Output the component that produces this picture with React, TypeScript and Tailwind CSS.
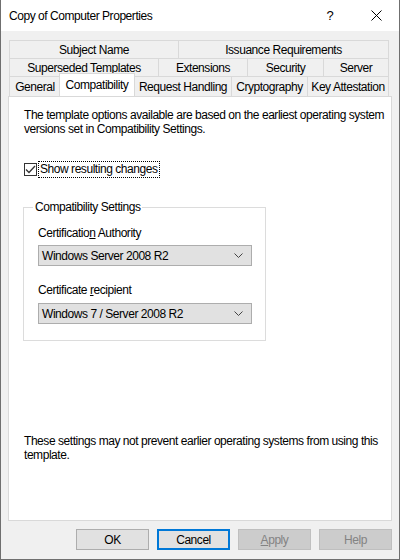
import React from "react";

const font = { fontFamily: '"Liberation Sans", Arial, sans-serif', letterSpacing: "-0.45px" };

function Tab({ label, w, active }: { label: string; w: number; active?: boolean }) {
  if (active) {
    return (
      <div
        className="relative z-10 -mt-[2px] -mx-[1px] h-[23px] bg-white border border-b-0 border-[#d9d9d9] flex justify-center pt-[2px] text-[12px] whitespace-nowrap"
        style={{ width: w + 2 }}
      >
        {label}
      </div>
    );
  }
  return (
    <div
      className="h-[18px] bg-[#f0f0f0] border-t border-l border-[#d9d9d9] last:border-r flex items-center justify-center text-[12px] whitespace-nowrap"
      style={{ width: w }}
    >
      {label}
    </div>
  );
}

function LowTab({ label, w, last }: { label: string; w: number; last?: boolean }) {
  return (
    <div
      className={
        "h-[20px] bg-[#f0f0f0] border-t border-l border-[#d9d9d9] flex items-center justify-center text-[12px] whitespace-nowrap " +
        (last ? "border-r" : "")
      }
      style={{ width: w }}
    >
      {label}
    </div>
  );
}

function Select({ value }: { value: string }) {
  return (
    <div className="w-[214px] h-[21px] bg-[#e1e1e1] border border-[#adadad] flex items-center justify-between pl-[3px] pr-[8px] text-[12px] whitespace-nowrap">
      <span>{value}</span>
      <svg width="9" height="6" viewBox="0 0 9 6">
        <path d="M0.5 0.5 L4.5 4.5 L8.5 0.5" fill="none" stroke="#444" strokeWidth="1" />
      </svg>
    </div>
  );
}

function Button({ label, primary, disabled, under }: { label: string; primary?: boolean; disabled?: boolean; under?: boolean }) {
  return (
    <div
      className={
        "w-[73px] h-[21px] flex items-center justify-center text-[12px] " +
        (primary
          ? "border-2 border-[#0078d7] bg-[#e1e1e1] "
          : disabled
          ? "border border-[#bfbfbf] bg-[#cccccc] text-[#838383] "
          : "border border-[#adadad] bg-[#e1e1e1] ")
      }
    >
      {under ? (
        <span>
          <span className="underline">A</span>pply
        </span>
      ) : (
        label
      )}
    </div>
  );
}

export default function App() {
  return (
    <div
      className="w-[400px] h-[560px] bg-[#f0f0f0] border-l border-r border-b border-[#6f6f6f] flex flex-col text-black"
      style={font}
    >
      {/* title bar */}
      <div className="h-[31px] bg-white flex items-center pl-[8px] text-[12px] shrink-0">
        <span className="flex-1 whitespace-nowrap">Copy of Computer Properties</span>
        <span className="w-[46px] text-center text-[13px]">?</span>
        <span className="w-[46px] flex justify-center">
          <svg width="11" height="11" viewBox="0 0 11 11">
            <path d="M0.5 0.5 L10.5 10.5 M10.5 0.5 L0.5 10.5" stroke="#000" strokeWidth="1" />
          </svg>
        </span>
      </div>

      {/* tabs */}
      <div className="pl-[8px] pt-[9px] flex flex-col">
        <div className="flex">
          <Tab label="Subject Name" w={169} />
          <Tab label="Issuance Requirements" w={211} />
        </div>
        <div className="flex">
          <Tab label="Superseded Templates" w={149} />
          <Tab label="Extensions" w={89} />
          <Tab label="Security" w={76} />
          <Tab label="Server" w={66} />
        </div>
        <div className="flex h-[20px] items-end">
          <LowTab label="General" w={51} />
          <Tab label="Compatibility" w={74} active />
          <LowTab label="Request Handling" w={97} />
          <LowTab label="Cryptography" w={76} />
          <LowTab label="Key Attestation" w={82} last />
        </div>
      </div>

      {/* panel */}
      <div className="ml-[7px] w-[384px] h-[425px] bg-white border border-[#d9d9d9] flex flex-col pl-[14px] pr-[15px] pt-[11px] text-[12px]">
        <p className="leading-[14px] whitespace-nowrap pl-[1px]">
          The template options available are based on the earliest operating system
          <br />
          versions set in Compatibility Settings.
        </p>

        <div className="flex items-center mt-[24px] h-[18px] pl-[1px]">
          <div className="w-[13px] h-[13px] border border-[#333] bg-white flex items-center justify-center">
            <svg width="11" height="9" viewBox="0 0 11 9">
              <path d="M1 4.5 L4 7.5 L10 1" fill="none" stroke="#333" strokeWidth="1.3" />
            </svg>
          </div>
          <span className="ml-[1px] px-[1px] h-[17px] leading-[15px] border border-dotted border-black whitespace-nowrap">
            Show resulting changes
          </span>
        </div>

        <fieldset className="mt-[22px] w-[240px] h-[141px] border border-[#dcdcdc] pl-[14px] pr-[13px] pb-0 m-0">
          <legend className="px-[2px] ml-[-5px] text-[12px] leading-[14px] whitespace-nowrap">Compatibility Settings</legend>
          <div className="mt-[12px] leading-[14px] whitespace-nowrap">
            Certificatio<span className="underline">n</span> Authority
          </div>
          <div className="mt-[5px]">
            <Select value="Windows Server 2008 R2" />
          </div>
          <div className="mt-[17px] leading-[14px] whitespace-nowrap">
            Certificate <span className="underline">r</span>ecipient
          </div>
          <div className="mt-[6px]">
            <Select value="Windows 7 / Server 2008 R2" />
          </div>
        </fieldset>

        <p className="mt-[93px] leading-[14px] whitespace-nowrap pl-[1px]">
          These settings may not prevent earlier operating systems from using this
          <br />
          template.
        </p>
      </div>

      {/* buttons */}
      <div className="flex justify-end gap-[8px] pr-[7px] mt-[8px]">
        <Button label="OK" />
        <Button label="Cancel" primary />
        <Button label="Apply" disabled under />
        <Button label="Help" disabled />
      </div>
    </div>
  );
}
